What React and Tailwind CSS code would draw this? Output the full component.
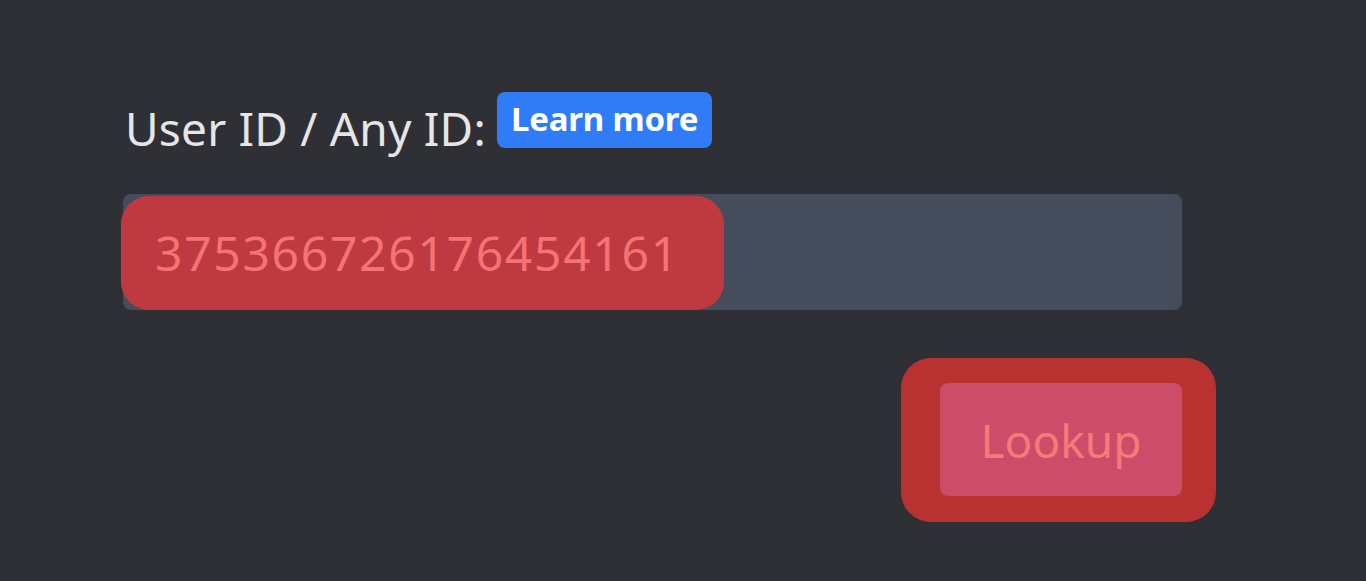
export default function App() {
  return (
    <div className="min-h-[581px] w-[1366px] bg-[#2e3036] pl-[123px] pt-[92px]" style={{ fontFamily: '"Noto Sans", "Open Sans", sans-serif' }}>
      <div className="w-[1059px]">
        <div className="flex items-start h-[60px]">
          <span className="mt-[6px] text-[46px] leading-[60px] text-[#e6e6e6] pl-[2px] tracking-[0.2px]">User ID / Any ID:</span>
          <span className="ml-[11px] h-[56px] px-[14px] rounded-[8px] bg-[#2f7cf6] text-white font-bold text-[33px] leading-[54px] tracking-[-0.2px]">Learn more</span>
        </div>
        <div className="relative mt-[42px] h-[116px] rounded-[8px] bg-[#454c5c]">
          <div className="absolute left-[-2px] top-[2px] h-[114px] w-[603px] rounded-[28px] bg-[#bf3a40] flex items-center pl-[34px]">
            <span className="text-[48px] text-[#f27474] leading-none tracking-[1.7px]">375366726176454161</span>
          </div>
        </div>
        <div className="flex justify-end mt-[48px]">
          <div className="mr-[-34px] rounded-[30px] bg-[#b83232] pl-[39px] pr-[34px] pt-[25px] pb-[26px]">
            <div className="w-[242px] h-[113px] rounded-[8px] bg-[#cc4c6a] flex items-center justify-center">
              <span className="text-[46px] text-[#f57a78] leading-none">Lookup</span>
            </div>
          </div>
        </div>
      </div>
    </div>
  );
}
